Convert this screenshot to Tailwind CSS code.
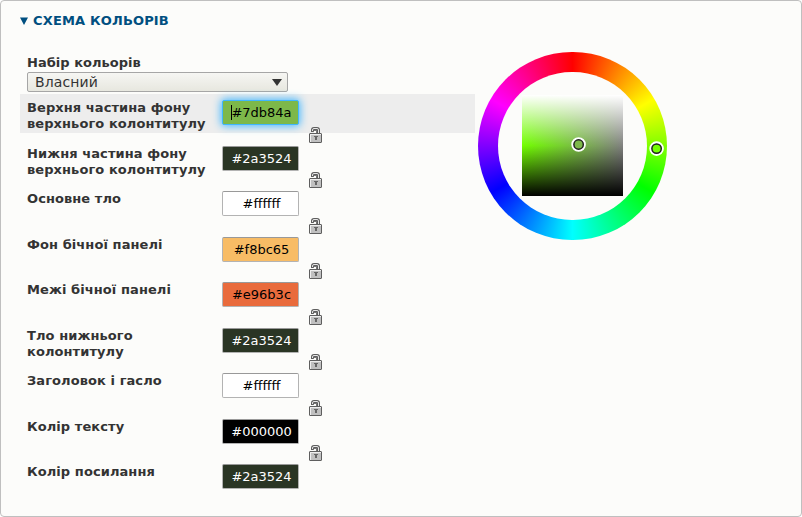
<!DOCTYPE html>
<html lang="uk">
<head>
<meta charset="utf-8">
<title>Схема кольорів</title>
<script src="https://cdn.jsdelivr.net/npm/@tailwindcss/browser@4"></script>
</head>
<body class="bg-white font-['DejaVu_Sans',sans-serif] text-[13px] text-[#333]">
<svg class="hidden">
  <symbol id="lock" viewBox="0 0 13 16">
    <path d="M3.5 5V3Q3.5 1.5 5 1.5H8Q9.5 1.5 9.5 3V7" fill="none" stroke="#5e5e5e" stroke-width="3"/>
    <path d="M3.5 4V3Q3.5 1.5 5 1.5H8Q9.5 1.5 9.5 3V7" fill="none" stroke="#e6e6e6" stroke-width="1"/>
    <path d="M5 3h3v4H5z" fill="#fcfcfa"/>
    <path d="M5 3h3v1H5zM7 3h1v4H7zM4 4h1v1H4z" fill="#777"/>
    <rect x="0.5" y="6.5" width="12" height="9" rx="0.5" fill="#c0c0c0" stroke="#5e5e5e"/>
    <path d="M1 7h11v1H1zM1 8h1v7H1z" fill="#eee"/>
    <path d="M5 9h4v1H5zM6 10h2v3H6z" fill="#666"/>
  </symbol>
</svg>
<main class="w-[802px] h-[517px] rounded-[4px] border border-[#bfbfbf] bg-[#fcfcfa] pl-[19px] overflow-hidden">
  <h2 class="flex items-center h-[16px] mt-[12px] font-bold text-[#004f80] tracking-[0.16px]">
    <svg class="w-[8px] h-[8px] mr-[5px]" viewBox="0 0 8 8"><path d="M0 0.5h8L4 8z" fill="#004f80"/></svg>СХЕМА КОЛЬОРІВ
  </h2>
  <div class="flex items-start mt-[22px]">
    <section class="w-[455px]">
      <label class="block pl-[7px] pt-[4px] h-[21px] leading-[16px] font-bold tracking-[0.03px]">Набір кольорів</label>
      <div class="ml-[7px] w-[261px] h-[20px] border border-[#a6a6a6] rounded-[2px] bg-linear-to-b from-[#f6f6f3] to-[#e7e7df] flex items-center justify-between pl-[7px] pr-[5px] text-[14px] tracking-[0.1px]">
        <span>Власний</span>
        <svg class="w-[10px] h-[7px]" viewBox="0 0 10 7"><path d="M0 0h10L5 7z" fill="#333"/></svg>
      </div>
      <div id="rows" class="mt-[2px]"></div>
    </section>
    <div class="relative mt-[1px] ml-[3px] w-[189px] h-[188px] rounded-full bg-[conic-gradient(#f00,#ff0,#0f0,#0ff,#00f,#f0f,#f00)] flex items-center justify-center">
      <div class="w-[149px] h-[148px] rounded-full bg-[#fcfcfa] flex items-start justify-center pt-[23px]">
        <div class="w-[101px] h-[101px] bg-[linear-gradient(#fff,#fff0_50%,#0000_50%,#000),linear-gradient(90deg,#72ff00,#808080)]"></div>
      </div>
      <svg class="absolute left-[93px] top-[85px] w-[15px] h-[15px]" viewBox="0 0 15 15"><circle cx="7.6" cy="7.5" r="6.1" fill="none" stroke="#fff" stroke-width="2.4"/><circle cx="7.6" cy="7.5" r="4.7" fill="#7db84a" stroke="#222" stroke-width="1.5"/></svg>
      <svg class="absolute left-[171px] top-[89px] w-[15px] h-[15px]" viewBox="0 0 15 15"><circle cx="7.6" cy="7.6" r="6.1" fill="none" stroke="#fff" stroke-width="2.4"/><circle cx="7.6" cy="7.6" r="4.7" fill="#72ff00" stroke="#222" stroke-width="1.5"/></svg>
    </div>
  </div>
</main>
<script>
const fields = [
  ['Верхня частина фону<br>верхнього колонтитулу', '#7db84a', '#000'],
  ['Нижня частина фону<br>верхнього колонтитулу', '#2a3524', '#fff'],
  ['Основне тло', '#ffffff', '#000'],
  ['Фон бічної панелі', '#f8bc65', '#000'],
  ['Межі бічної панелі', '#e96b3c', '#000'],
  ['Тло нижнього<br>колонтитулу', '#2a3524', '#fff'],
  ['Заголовок і гасло', '#ffffff', '#000'],
  ['Колір тексту', '#000000', '#fff'],
  ['Колір посилання', '#2a3524', '#fff']
];
document.getElementById('rows').innerHTML = fields.map(([name, color, ink], i) => `
  <div class="relative h-[45.5px]">
    <div class="flex h-[39px] pl-[7px] pt-[6px] ${i ? '' : 'bg-[#ededed]'}">
      <div class="w-[195px] leading-[16px] font-bold tracking-[0.08px]">${name}</div>
      <div class="relative w-[77px] h-[25px] border rounded-[2px] flex items-start justify-center pt-[1px] pl-[2px] leading-[22px] ${i ? 'border-[#b3b3b3] border-t-[#999]' : 'border-[#40b6ff] shadow-[0_0_8px_1px_#40b6ff]'}" style="background-color:${color};color:${ink}">
        ${i ? '' : '<i class="absolute left-[8px] top-[4px] w-px h-[15px] bg-black"></i>'}${color}
      </div>
    </div>
    ${i < 8 ? '<svg class="absolute left-[289px] top-[32.9px] w-[13px] h-[16px]"><use href="#lock"/></svg>' : ''}
  </div>`).join('');
</script>
</body>
</html>
